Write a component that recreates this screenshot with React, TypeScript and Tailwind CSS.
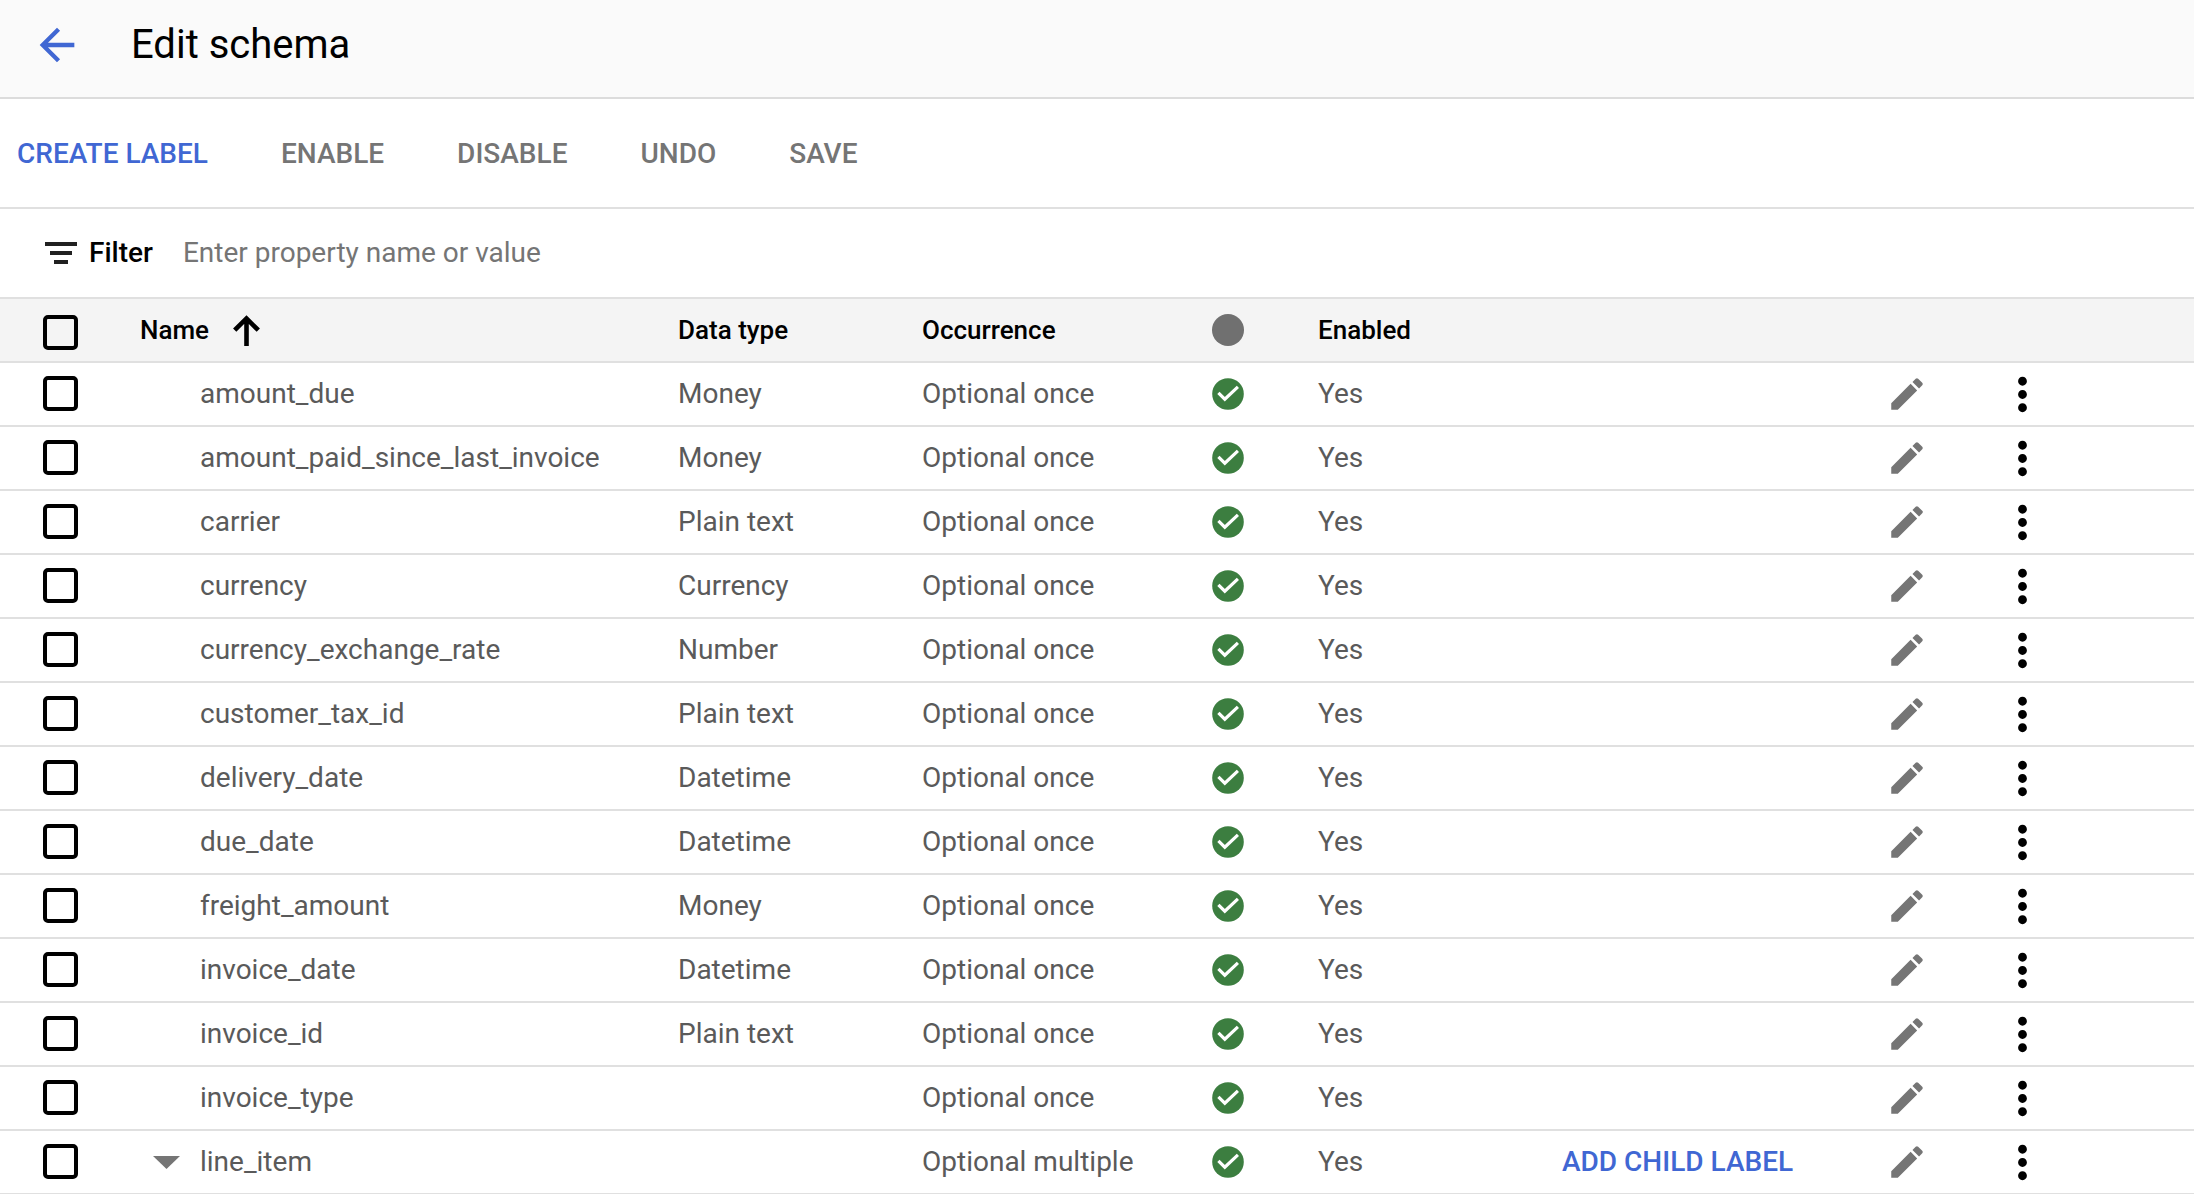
import { useState } from "react";
import { MdArrowBack, MdEdit, MdMoreVert } from "react-icons/md";

type Label = {
  name: string;
  dataType?: string;
  occurrence: string;
  hasChildren?: boolean;
};

const labels: Label[] = [
  { name: "amount_due", dataType: "Money", occurrence: "Optional once" },
  { name: "amount_paid_since_last_invoice", dataType: "Money", occurrence: "Optional once" },
  { name: "carrier", dataType: "Plain text", occurrence: "Optional once" },
  { name: "currency", dataType: "Currency", occurrence: "Optional once" },
  { name: "currency_exchange_rate", dataType: "Number", occurrence: "Optional once" },
  { name: "customer_tax_id", dataType: "Plain text", occurrence: "Optional once" },
  { name: "delivery_date", dataType: "Datetime", occurrence: "Optional once" },
  { name: "due_date", dataType: "Datetime", occurrence: "Optional once" },
  { name: "freight_amount", dataType: "Money", occurrence: "Optional once" },
  { name: "invoice_date", dataType: "Datetime", occurrence: "Optional once" },
  { name: "invoice_id", dataType: "Plain text", occurrence: "Optional once" },
  { name: "invoice_type", occurrence: "Optional once" },
  { name: "line_item", occurrence: "Optional multiple", hasChildren: true },
];

const FilterIcon = () => (
  <svg width="32" height="22" viewBox="0 0 32 22" fill="#212121" aria-hidden="true">
    <rect width="32" height="4" />
    <rect x="5" y="9" width="22" height="4" />
    <rect x="9" y="18" width="14" height="4" />
  </svg>
);

const SortIcon = () => (
  <svg width="27" height="31" viewBox="0 0 27 31" fill="none" stroke="#000" strokeWidth="4.6" aria-hidden="true">
    <path d="M13.5 31V3.5M1.7 15.2L13.5 3.4l11.8 11.8" />
  </svg>
);

const CheckIcon = () => (
  <svg width="32" height="32" viewBox="0 0 32 32" role="img" aria-label="Active" className="block">
    <circle cx="16" cy="16" r="15.8" fill="#3c7e40" />
    <path d="M6.4 14.9l6.4 6.3L25.9 8.8" fill="none" stroke="#fff" strokeWidth="3.2" />
  </svg>
);

const Checkbox = ({ label, checked, onChange }: { label: string; checked: boolean; onChange: () => void }) => (
  <input
    type="checkbox"
    aria-label={label}
    checked={checked}
    onChange={onChange}
    className="block size-[35px] appearance-none rounded-[5px] border-4 border-black checked:bg-black cursor-pointer"
  />
);

const cell = "h-16 p-0 border-b-2 border-[#e0e0e0] whitespace-nowrap";

const App = () => {
  const [selected, setSelected] = useState<string[]>([]);
  const [query, setQuery] = useState("");

  const rows = labels.filter((l) => l.name.includes(query));
  const allSelected = selected.length === labels.length;

  const toggle = (name: string) => {
    setSelected((prev) => (prev.includes(name) ? prev.filter((n) => n !== name) : [...prev, name]));
  };

  return (
    <div className="h-screen overflow-hidden bg-white text-black font-[Roboto,sans-serif]">
      <header className="flex items-center gap-12 h-[99px] pl-[31px] pb-2 bg-[#fafafa] border-b-2 border-[#dcdcdc]">
        <button aria-label="Back" className="text-[#4067d3] cursor-pointer">
          <MdArrowBack size={52} />
        </button>
        <h1 className="text-[40px] leading-12">Edit schema</h1>
      </header>

      <div className="flex items-center gap-[73px] h-[110px] pl-[17px] pt-[2px] border-b-2 border-[#e0e0e0] text-[28px] leading-9 font-medium text-[#757575]">
        <button className="text-[#4067d3] cursor-pointer">CREATE LABEL</button>
        {["ENABLE", "DISABLE", "UNDO", "SAVE"].map((action) => (
          <button key={action} className="cursor-pointer">
            {action}
          </button>
        ))}
      </div>

      <div className="flex items-center h-[90px] pl-[45px] border-b-2 border-[#e0e0e0] text-[28px] leading-9">
        <label htmlFor="filter" className="flex items-center gap-3 font-medium">
          <FilterIcon />
          Filter
        </label>
        <input
          id="filter"
          value={query}
          onChange={(e) => setQuery(e.target.value)}
          placeholder="Enter property name or value"
          className="flex-1 ml-[30px] outline-none placeholder:text-[#757575]"
        />
      </div>

      <table className="w-full table-fixed border-separate border-spacing-0 text-left text-[28px] leading-9 text-[#5a5a5a]">
        <colgroup>
          <col className="w-[140px]" />
          <col className="w-[538px]" />
          <col className="w-[244px]" />
          <col className="w-[290px]" />
          <col className="w-[106px]" />
          <col className="w-[244px]" />
          <col className="w-[324px]" />
          <col className="w-[110px]" />
          <col />
        </colgroup>
        <thead className="bg-[#f4f4f4] text-[26px] text-black">
          <tr>
            <th className={`${cell} pl-[43px] pt-1`}>
              <Checkbox
                label="Select all"
                checked={allSelected}
                onChange={() => setSelected(allSelected ? [] : labels.map((l) => l.name))}
              />
            </th>
            <th className={`${cell} font-medium`}>
              <button className="flex items-center gap-6 cursor-pointer">
                Name
                <SortIcon />
              </button>
            </th>
            <th className={`${cell} font-medium`}>Data type</th>
            <th className={`${cell} font-medium`}>Occurrence</th>
            <th className={cell}>
              <div className="size-8 rounded-full bg-[#707070]" />
            </th>
            <th className={`${cell} font-medium`}>Enabled</th>
            <td className={cell} />
            <td className={cell} />
            <td className={cell} />
          </tr>
        </thead>
        <tbody>
          {rows.map((label) => (
            <tr key={label.name}>
              <td className={`${cell} pl-[43px] pb-px`}>
                <Checkbox
                  label={`Select ${label.name}`}
                  checked={selected.includes(label.name)}
                  onChange={() => toggle(label.name)}
                />
              </td>
              <td className={cell}>
                <div className="flex items-center">
                  <div className="w-[60px] pl-[13px]">
                    {label.hasChildren && (
                      <button aria-label="Collapse" className="block cursor-pointer">
                        <svg width="27" height="13" viewBox="0 0 27 13" fill="#757575">
                          <path d="M0 0h27L13.5 13z" />
                        </svg>
                      </button>
                    )}
                  </div>
                  {label.name}
                </div>
              </td>
              <td className={cell}>{label.dataType}</td>
              <td className={cell}>{label.occurrence}</td>
              <td className={cell}>
                <CheckIcon />
              </td>
              <td className={cell}>Yes</td>
              <td className={cell}>
                {label.hasChildren && (
                  <button className="block font-medium text-[#4067d3] cursor-pointer">ADD CHILD LABEL</button>
                )}
              </td>
              <td className={cell}>
                <button aria-label={`Edit ${label.name}`} className="block text-[#757575] cursor-pointer">
                  <MdEdit size={42} />
                </button>
              </td>
              <td className={cell}>
                <button aria-label={`More actions for ${label.name}`} className="block text-black cursor-pointer">
                  <MdMoreVert size={53} />
                </button>
              </td>
            </tr>
          ))}
        </tbody>
      </table>
    </div>
  );
};

export default App;
